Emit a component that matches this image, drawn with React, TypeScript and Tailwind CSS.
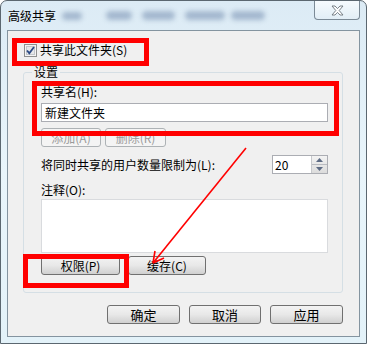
import React from 'react';

const FONT = { fontFamily: '"Noto Sans CJK SC", "Liberation Sans", sans-serif' };

function Btn({ label, disabled, className = '' }: { label: string; disabled?: boolean; className?: string }) {
  return (
    <div
      className={
        'h-[19px] flex items-center justify-center rounded-[3px] border leading-none ' +
        (disabled
          ? 'border-[#adb2b5] bg-[#f4f4f4] text-[#9a9a9a] '
          : 'border-[#707070] bg-gradient-to-b from-[#f3f3f3] via-[#e8e8e8] to-[#d0d0d0] text-black ') +
        className
      }
    >
      {label}
    </div>
  );
}

function CheckBox() {
  return (
    <svg width="13" height="13" viewBox="0 0 13 13">
      <rect x="0.5" y="0.5" width="12" height="12" fill="#f4f4f4" stroke="#8e8f8f" />
      <rect x="2.5" y="2.5" width="8" height="8" fill="#e6e8ea" stroke="#c3c7cb" />
      <path d="M3 6.5 L5.3 9.2 L10 3" fill="none" stroke="#2c4a84" strokeWidth="1.8" />
    </svg>
  );
}

export default function App() {
  return (
    <div
      className="relative w-[367px] h-[344px] overflow-hidden rounded-t-[7px] border border-[#5b6770] bg-gradient-to-b from-[#dcebf5] via-[#e9f5fb] to-[#e3f2f9] text-black"
      style={FONT}
    >
      {/* title bar */}
      <div className="h-[29px] flex items-start">
        <div className="pl-[7px] pt-[8px] text-[12px] leading-[14px] text-black">高级共享</div>
        <div className="flex items-center pt-[10px] pl-[6px] blur-[2.5px] opacity-60">
          <div className="w-[20px] h-[8px] bg-[#7d95b5] rounded-full" />
          <div className="w-[26px] h-[9px] bg-[#7d95b5] rounded-full ml-[24px]" />
          <div className="w-[33px] h-[9px] bg-[#7d95b5] rounded-full ml-[10px]" />
          <div className="w-[40px] h-[9px] bg-[#7d95b5] rounded-full ml-[10px]" />
          <div className="w-[34px] h-[9px] bg-[#7d95b5] rounded-full ml-[6px]" />
        </div>
        <div className="ml-auto mr-[6px] w-[46px] h-[19px] rounded-b-[4px] border border-t-0 border-[#7b8a96] bg-gradient-to-b from-[#f6fbfe] to-[#e2eef6] flex items-center justify-center">
          <svg width="13" height="11" viewBox="0 0 13 11">
            <path
              d="M1 1 H4 L6.5 3.6 L9 1 H12 L8.2 5.5 L12 10 H9 L6.5 7.4 L4 10 H1 L4.8 5.5 Z"
              fill="#ffffff"
              stroke="#6b747c"
              strokeWidth="0.9"
            />
          </svg>
        </div>
      </div>

      {/* client area */}
      <div className="mx-[6px] h-[307px] border border-[#8494a0] bg-[#f0f0f0] pl-[15px] pr-[15px]">
        <div className="mt-[12px] ml-[1px] flex items-center gap-[3px] h-[14px]">
          <CheckBox />
          <span className="text-[12px] leading-[14px]">共享此文件夹(S)</span>
        </div>

        {/* group box */}
        <div className="relative mt-[15px] h-[221px] w-[320px] rounded-[3px] border border-[#d5dfe5] pl-[17px] pr-[14px]">
          <div className="absolute left-[8px] top-[-8px] bg-[#f0f0f0] px-[2px] text-[12px] leading-[14px]">设置</div>
          <div className="mt-[12px] text-[12px] leading-[14px]">共享名(H):</div>
          <div className="mt-[4px] h-[19px] border border-[#abadb3] bg-white pl-[3px] text-[12px] leading-[17px]">新建文件夹</div>
          <div className="mt-[6px] flex gap-[4px] text-[12px]">
            <Btn label="添加(A)" disabled className="w-[60px]" />
            <Btn label="删除(R)" disabled className="w-[61px]" />
          </div>
          <div className="mt-[8px] flex items-center h-[19px]">
            <span className="text-[12px] leading-[14px]">将同时共享的用户数量限制为(L):</span>
            <div className="ml-auto flex h-[19px] w-[56px] border border-[#abadb3] bg-white">
              <div className="flex-1 pl-[2px] text-[12px] leading-[17px]">20</div>
              <div className="w-[16px] flex flex-col border-l border-[#c7c9cd] bg-gradient-to-b from-[#f3f3f3] to-[#dcdcdc]">
                <div className="flex-1 flex items-center justify-center border-b border-[#b9bbc0]">
                  <svg width="7" height="4" viewBox="0 0 7 4"><path d="M0 4 L3.5 0 L7 4 Z" fill="#5d6b84" /></svg>
                </div>
                <div className="flex-1 flex items-center justify-center">
                  <svg width="7" height="4" viewBox="0 0 7 4"><path d="M0 0 L3.5 4 L7 0 Z" fill="#5d6b84" /></svg>
                </div>
              </div>
            </div>
          </div>
          <div className="mt-[9px] text-[12px] leading-[14px]">注释(O):</div>
          <div className="mt-[2px] h-[54px] border border-[#d9dbde] bg-white" />
          <div className="mt-[3px] flex gap-[8px] text-[12px]">
            <Btn label="权限(P)" className="w-[79px]" />
            <Btn label="缓存(C)" className="w-[78px]" />
          </div>
        </div>

        <div className="mt-[12px] mr-[1px] flex justify-end gap-[9px] text-[13px]">
          <Btn label="确定" className="w-[73px]" />
          <Btn label="取消" className="w-[72px]" />
          <Btn label="应用" className="w-[73px]" />
        </div>
      </div>

      {/* annotations */}
      <div className="absolute left-[11px] top-[37px] w-[137px] h-[28px] border-[5px] border-[#ff0000]" />
      <div className="absolute left-[31px] top-[80px] w-[307px] h-[55px] border-[5px] border-[#ff0000]" />
      <div className="absolute left-[22px] top-[253px] w-[106px] h-[34px] border-[5px] border-[#ff0000]" />
      <svg className="absolute left-0 top-0" width="367" height="344" viewBox="0 0 367 344">
        <path d="M245 147 L152 262" stroke="#ff0000" strokeWidth="1.6" fill="none" />
        <path d="M152 262 L163 257 M152 262 L154 250" stroke="#ff0000" strokeWidth="1.6" fill="none" />
      </svg>
    </div>
  );
}
